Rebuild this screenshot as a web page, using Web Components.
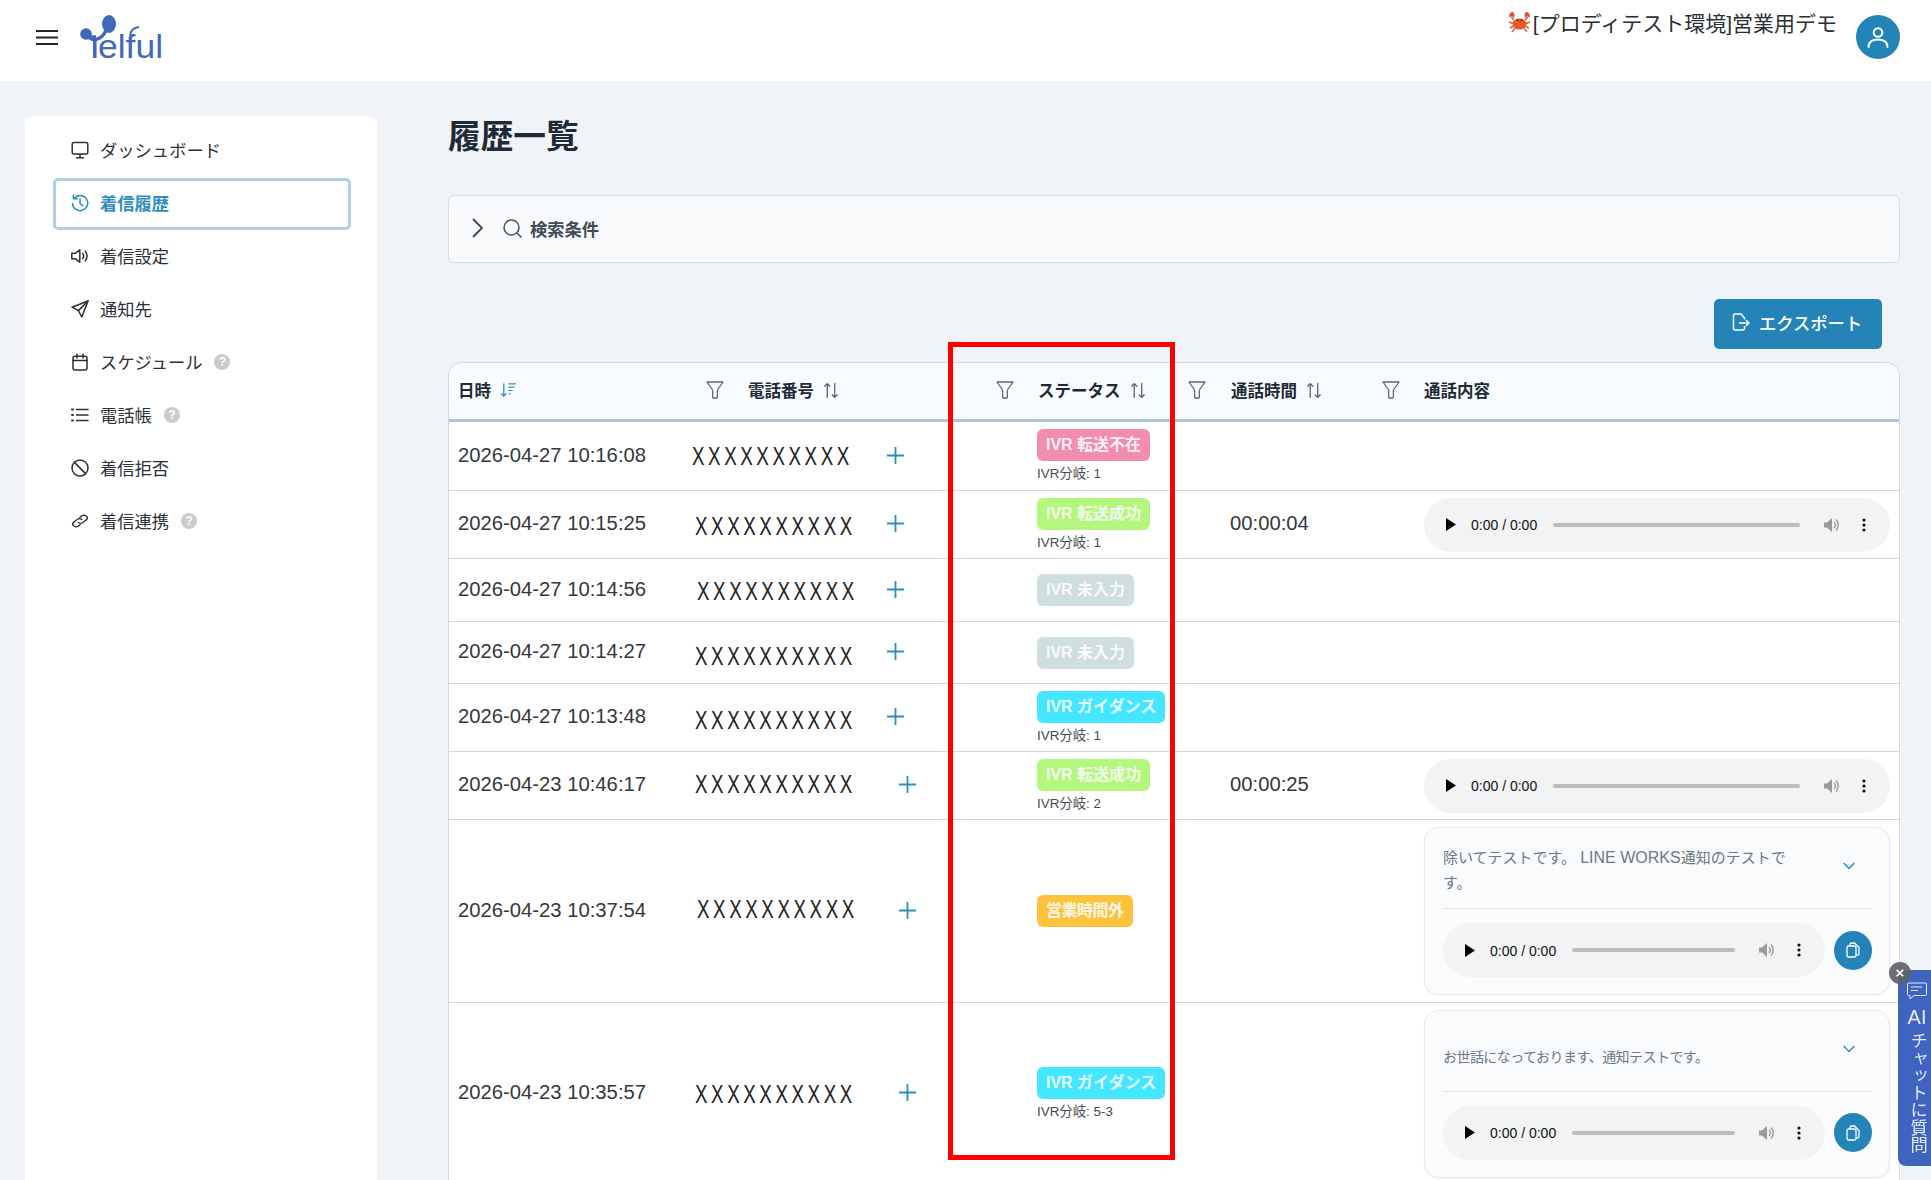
<!DOCTYPE html>
<html lang="ja">
<head>
<meta charset="utf-8">
<title>履歴一覧</title>
<style>
    html, body { margin: 0; height: 100%; overflow: hidden; background: #f0f4f9; }
    body { font-family: "Liberation Sans", "Noto Sans CJK JP", sans-serif; color: #333; }
</style>
</head>
<body>

<app-header></app-header>

<app-shell>
    <side-nav slot="side">
        <nav-item icon="desktop">ダッシュボード</nav-item>
        <nav-item icon="history" active>着信履歴</nav-item>
        <nav-item icon="volume">着信設定</nav-item>
        <nav-item icon="send">通知先</nav-item>
        <nav-item icon="calendar" help>スケジュール</nav-item>
        <nav-item icon="list" help>電話帳</nav-item>
        <nav-item icon="ban">着信拒否</nav-item>
        <nav-item icon="link" help>着信連携</nav-item>
    </side-nav>

    <page-title>履歴一覧</page-title>
    <search-panel>検索条件</search-panel>
    <export-bar>エクスポート</export-bar>

    <call-table>
        <call-row date="2026-04-27 10:16:08" h="69" px="0" py="0" plus="195">
            <status-tag slot="status" kind="pink" sub="IVR分岐: 1">IVR 転送不在</status-tag>
        </call-row>
        <call-row date="2026-04-27 10:15:25" h="68" px="3" py="1" plus="192" dur="00:00:04">
            <status-tag slot="status" kind="green" sub="IVR分岐: 1">IVR 転送成功</status-tag>
            <audio-bar slot="content"></audio-bar>
        </call-row>
        <call-row date="2026-04-27 10:14:56" h="63" px="5" py="1" plus="190">
            <status-tag slot="status" kind="grey">IVR 未入力</status-tag>
        </call-row>
        <call-row date="2026-04-27 10:14:27" h="62" px="3" py="3" plus="192">
            <status-tag slot="status" kind="grey">IVR 未入力</status-tag>
        </call-row>
        <call-row date="2026-04-27 10:13:48" h="68" px="3" py="2" plus="192">
            <status-tag slot="status" kind="cyan" sub="IVR分岐: 1">IVR ガイダンス</status-tag>
        </call-row>
        <call-row date="2026-04-23 10:46:17" h="68" px="3" py="-2" plus="204" dur="00:00:25">
            <status-tag slot="status" kind="green" sub="IVR分岐: 2">IVR 転送成功</status-tag>
            <audio-bar slot="content"></audio-bar>
        </call-row>
        <call-row date="2026-04-23 10:37:54" h="183" px="5" py="-2" plus="202">
            <status-tag slot="status" kind="amber">営業時間外</status-tag>
            <note-card slot="content" top="17">除いてテストです。 <span style="font-size:16px">LINE WORKS</span>通知のテストで<br>す。</note-card>
        </call-row>
        <call-row date="2026-04-23 10:35:57" h="182" px="3" py="0" plus="204">
            <status-tag slot="status" kind="cyan" sub="IVR分岐: 5-3">IVR ガイダンス</status-tag>
            <note-card slot="content" top="34" tight>お世話になっております、通知テストです。</note-card>
        </call-row>
    </call-table>
</app-shell>

<mark-box></mark-box>
<chat-tab></chat-tab>

<script>
    // 共通: shadow root に markup を流し込むだけ
    class Base extends HTMLElement {
        render(html) {
            if (!this.shadowRoot) this.attachShadow({mode: 'open'});
            this.shadowRoot.innerHTML = html;
        }
    }

    const ICONS = {
        desktop: '<rect x="1.2" y="1.5" width="15.6" height="11.5" rx="1.6"/><path d="M9 13v3.6M5.5 16.8h7"/>',
        history: '<path d="M3.2 4.2A7.6 7.6 0 1 1 1.5 9.6"/><path d="M2.4 1v3.8h3.9"/><path d="M9 5v4.6l2.8 2"/>',
        volume: '<path d="M.8 6.3h3.4L8.8 2.800v12.400l-4.600-3.500H.8z"/><path d="M11.500 6.400a3.800 3.800 0 0 1 0 5.200"/><path d="M14.200 4.200a7.200 7.200 0 0 1 0 9.600"/>',
        send: '<path d="M17 1 1 7.2l6.4 3.4L10.8 17z"/><path d="M17 1 7.4 10.6"/>',
        calendar: '<rect x="2" y="3.2" width="14" height="13.8" rx="2"/><path d="M2 7.6h14M6 1v4M12 1v4"/>',
        list: '<path d="M5.5 3.5H17M5.5 9H17M5.5 14.5H17"/><path d="M1 3.5h1M1 9h1M1 14.5h1" stroke-width="2"/>',
        ban: '<circle cx="9" cy="9" r="8"/><path d="m3.4 3.4 11.2 11.2"/>',
        link: '<g transform="translate(0 2) scale(1 .78)"><path d="M7.2 10.8a3.4 3.4 0 0 0 4.8 0l3.4-3.4a3.4 3.4 0 0 0-4.8-4.8L9 4.2"/><path d="M10.8 7.2a3.4 3.4 0 0 0-4.8 0l-3.4 3.4a3.4 3.4 0 0 0 4.8 4.8L9 13.8"/></g>'
    };
    const FUNNEL = '<svg class="funnel" width="18" height="18" viewBox="0 0 18 18" fill="none" stroke="#5d6872" stroke-width="1.3" stroke-linejoin="round"><path d="M1 1h16l-5.6 8v7.3a.7.7 0 0 1-.7.7H7.3a.7.7 0 0 1-.7-.7V9z"/></svg>';
    const SORT = '<svg class="sort" width="16" height="17" viewBox="0 0 15 16" fill="none" stroke="#56616b" stroke-width="1.2"><path d="M4 15V1.5M1.3 4.2 4 1.5l2.7 2.7"/><path d="M11 1v13.5M8.3 11.8l2.7 2.7 2.7-2.7"/></svg>';
    const SORT_ON = '<svg class="sort" width="17" height="16" viewBox="0 0 18 16" fill="none" stroke="#2f8dbe" stroke-width="1.4"><path d="M4 1v13.5M1.2 11.7 4 14.5l2.8-2.8"/><path d="M9 1.5h8M9 5h6.5M9 8.5h4.5M9 12h2.5" stroke-width="1.200"/></svg>';

    customElements.define('app-header', class extends Base {
        connectedCallback() {
            this.render(`
            <style>
                :host { display: flex; height: 81px; background: #fff; padding: 0 31px 0 36px; box-sizing: border-box; }
                .burger { margin-top: 28px; }
                .logo { margin: 15px 0 0 22px; }
                .logo text { font-family: "Liberation Sans", sans-serif; font-size: 34px; fill: #4169b8; }
                .org { margin: 9px 19px 0 auto; display: flex; align-items: center; height: 26px; font-size: 21px; color: #2b2f33; white-space: nowrap; }
                .crab { margin-right: 2px; }
                .me { margin-top: 15px; width: 44px; height: 44px; border-radius: 50%; background: #2484b8; display: flex; align-items: center; justify-content: center; }
            </style>
            <svg class="burger" width="22" height="19" viewBox="0 0 22 19" stroke="#20262c" stroke-width="2.2"><path d="M0 3h22M0 9.5h22M0 16h22"/></svg>
            <svg class="logo" width="84" height="56" viewBox="0 0 84 56">
                <circle cx="6" cy="19" r="5.8" fill="#4169b8"/>
                <ellipse cx="29" cy="9" rx="7" ry="9" fill="#4169b8"/>
                <path d="M8 22q9 6 16-3 2-3 3-6" fill="none" stroke="#4169b8" stroke-width="3.4"/>
                <path d="M6 22h10M14.800 24v19" fill="none" stroke="#4169b8" stroke-width="3.6"/>
                <path d="M50 20q1-7 9-8" fill="none" stroke="#4169b8" stroke-width="2"/>
                <text x="18" y="43" textLength="65" lengthAdjust="spacingAndGlyphs">elful</text>
            </svg>
            <div class="org">
                <svg class="crab" width="23" height="22" viewBox="0 0 23 22" fill="none">
                    <path d="M6 13 1 11M6 15l-4 2M7 17l-3 4M17 13l5-2M17 15l4 2M16 17l3 4" stroke="#d8613c" stroke-width="1.4"/>
                    <path d="M6 9 3 6M17 9l3-3" stroke="#d8613c" stroke-width="1.6"/>
                    <path d="M5 1C2 1 .8 3.5 1.2 6.5L4 5 5 7c2-1.5 2-4 0-6zM18 1c3 0 4.200 2.500 3.800 5.500L19 5l-1 2c-2-1.500-2-4 0-6z" fill="#e0512a"/>
                    <ellipse cx="11.500" cy="13" rx="7" ry="5.600" fill="#ea5a26"/>
                    <circle cx="9.500" cy="9" r="1" fill="#5a2a1c"/><circle cx="13.500" cy="9" r="1" fill="#5a2a1c"/>
                </svg>
                [プロディテスト環境]営業用デモ
            </div>
            <div class="me">
                <svg width="24" height="24" viewBox="0 0 24 24" fill="none" stroke="#fff" stroke-width="2" stroke-linecap="round"><circle cx="12" cy="7.500" r="4.300"/><path d="M2.500 22c0-5 4-7.500 9.500-7.500s9.500 2.500 9.500 7.500"/></svg>
            </div>`);
        }
    });

    customElements.define('app-shell', class extends Base {
        connectedCallback() {
            this.render(`
            <style>
                :host { display: grid; grid-template-columns: 352px 1fr; height: calc(100vh - 81px); padding-left: 25px; column-gap: 71px; overflow: hidden; box-sizing: border-box; }
                .main { padding-right: 31px; min-width: 0; }
            </style>
            <slot name="side"></slot>
            <div class="main"><slot></slot></div>`);
        }
    });

    customElements.define('side-nav', class extends Base {
        connectedCallback() {
            this.render(`
            <style>
                :host { display: flex; flex-direction: column; gap: 2px; margin-top: 35px; background: #fff; border-radius: 8px 8px 0 0; padding: 8px 26px 0 28px; }
            </style>
            <slot></slot>`);
        }
    });

    customElements.define('nav-item', class extends Base {
        connectedCallback() {
            const on = this.hasAttribute('active');
            this.render(`
            <style>
                :host { display: flex; align-items: center; height: 51px; padding-left: 18px; box-sizing: border-box; font-size: 17.300px; color: ${on ? '#2f8dbe' : '#2b3138'}; font-weight: ${on ? 600 : 400}; border-radius: 5px; ${on ? 'height: 52px; margin: 1px 0 -2px; border: 3px solid #aed0e1; padding: 0 0 3px 15px;' : ''} }
                svg { flex: none; margin-right: 11px; }
                .q { width: 16px; height: 16px; margin-left: 12px; border-radius: 50%; background: #c9cbcd; color: #fff; font: 700 12px/16px "Liberation Sans", sans-serif; text-align: center; }
            </style>
            <svg width="18" height="18" viewBox="0 0 18 18" fill="none" stroke="currentColor" stroke-width="1.5" stroke-linejoin="round" stroke-linecap="round">${ICONS[this.getAttribute('icon')]}</svg>
            <slot></slot>
            ${this.hasAttribute('help') ? '<span class="q">?</span>' : ''}`);
        }
    });

    customElements.define('page-title', class extends Base {
        connectedCallback() {
            this.render(`
            <style>
                :host { display: block; padding-top: 36px; font-size: 32.700px; line-height: 40px; font-weight: 700; color: #1f2a37; }
            </style>
            <slot></slot>`);
        }
    });

    customElements.define('search-panel', class extends Base {
        connectedCallback() {
            this.render(`
            <style>
                :host { display: flex; align-items: center; height: 68px; margin-top: 38px; padding: 0 0 2px 23px; box-sizing: border-box; border: 1px solid #d4dce4; border-radius: 6px; background: #f8fafc; font-size: 17.300px; font-weight: 600; color: #3f4c59; }
                .find { margin: 0 8px 0 20px; }
            </style>
            <svg width="11" height="20" viewBox="0 0 11 20" fill="none" stroke="#3b4651" stroke-width="1.800"><path d="m1 1 9 9-9 9"/></svg>
            <svg class="find" width="19" height="19" viewBox="0 0 19 19" fill="none" stroke="#4a5560" stroke-width="1.500"><circle cx="8.500" cy="8.500" r="7.500"/><path d="m14 14 4.500 4.500"/></svg>
            <slot></slot>`);
        }
    });

    customElements.define('export-bar', class extends Base {
        connectedCallback() {
            this.render(`
            <style>
                :host { display: flex; justify-content: flex-end; margin-top: 36px; padding-right: 18px; }
                button { display: flex; align-items: center; width: 168px; height: 50px; padding: 0 0 4px 18px; box-sizing: border-box; border: 0; border-radius: 5px; background: #2484b8; color: #fff; font: 500 17.300px "Liberation Sans", "Noto Sans CJK JP", sans-serif; }
                svg { margin-right: 8px; }
            </style>
            <button>
                <svg width="19" height="18" viewBox="0 0 19 18" fill="none" stroke="#fff" stroke-width="1.400" stroke-linejoin="round"><path d="M12.500 6.500V5L9 1H3a1.500 1.500 0 0 0-1.500 1.500v13A1.500 1.500 0 0 0 3 17h8a1.500 1.500 0 0 0 1.500-1.500V13"/><path d="M7 10h10M14 7l3 3-3 3"/></svg>
                <slot></slot>
            </button>`);
        }
    });

    customElements.define('call-table', class extends Base {
        connectedCallback() {
            this.render(`
            <style>
                :host { display: block; margin-top: 13px; border: 1px solid #d0d9e0; border-bottom: 0; border-radius: 14px 14px 0 0; background: #fff; overflow: hidden; }
                .head { display: grid; grid-template-columns: 286px 290px 192px 194px 1fr; height: 59px; box-sizing: border-box; border-bottom: 3px solid #aec6d2; background: #f8fcff; font-size: 16.500px; font-weight: 700; color: #1f2a37; }
                .th { display: flex; align-items: center; padding: 0 0 2px 13px; }
                .th:first-child { padding-left: 9px; }
                .th:nth-child(4) { padding-left: 14px; }
                .sort { margin-left: 9px; }
                .funnel { margin-left: auto; margin-right: 11px; }
            </style>
            <div class="head">
                <div class="th"><span>日時</span>${SORT_ON}${FUNNEL}</div>
                <div class="th"><span>電話番号</span>${SORT}${FUNNEL}</div>
                <div class="th"><span>ステータス</span>${SORT}${FUNNEL}</div>
                <div class="th"><span>通話時間</span>${SORT}${FUNNEL}</div>
                <div class="th"><span>通話内容</span></div>
            </div>
            <slot></slot>`);
        }
    });

    customElements.define('call-row', class extends Base {
        connectedCallback() {
            const a = n => this.getAttribute(n);
            this.render(`
            <style>
                :host { display: grid; grid-template-columns: 243px 333px 192px 194px 1fr; align-items: center; height: ${a('h')}px; box-sizing: border-box; border-bottom: 1px solid #d2d8de; font-size: 20.250px; color: #33383d; }
                .date { padding: 0 0 2px 9px; }
                .tel { display: flex; align-items: center; }
                .x { width: ${a('plus')}px; margin: ${a('py')}px 0 ${-a('py')}px ${a('px')}px; font-size: 26px; line-height: 30px; color: #222; white-space: nowrap; flex: none; }
                /* マスクのXは縦長に見せる */
                .x span { display: inline-block; letter-spacing: 5px; transform: scaleX(.72); transform-origin: left center; }
                .plus { flex: none; margin-bottom: 2px; }
                .st { padding-left: 12px; }
                .dur { padding: 0 0 2px 13px; }
                .body { padding: 0 9px 0 13px; }
            </style>
            <div class="date">${a('date')}</div>
            <div class="tel">
                <div class="x"><span>XXXXXXXXXX</span></div>
                <svg class="plus" width="17" height="17" viewBox="0 0 17 17" stroke="#2f8dbe" stroke-width="1.800"><path d="M8.500 0v17M0 8.500h17"/></svg>
            </div>
            <div class="st"><slot name="status"></slot></div>
            <div class="dur">${a('dur') || ''}</div>
            <div class="body"><slot name="content"></slot></div>`);
        }
    });

    const TAG_COLORS = {pink: '#f28cb1', green: '#b4f77e', grey: '#cfdedf', cyan: '#44e7ff', amber: '#fdc33f'};
    customElements.define('status-tag', class extends Base {
        connectedCallback() {
            const sub = this.getAttribute('sub');
            const kind = this.getAttribute('kind');
            this.render(`
            <style>
                :host { display: block; ${sub ? 'padding-top: 4px;' : ''} }
                .tag { display: inline-block; height: 32px; line-height: 32px; padding: 0 9px; border-radius: 6px; background: ${TAG_COLORS[kind]}; color: rgba(255,255,255,.88); font-size: 16px; font-weight: 700; white-space: nowrap; vertical-align: top; ${kind === 'amber' ? 'letter-spacing: -.5px;' : ''} }
                .row { height: 32px; }
                .sub { height: 26px; line-height: 26px; font-size: 13.400px; color: #444b52; }
            </style>
            <div class="row"><span class="tag"><slot></slot></span></div>
            ${sub ? `<div class="sub">${sub}</div>` : ''}`);
        }
    });

    customElements.define('audio-bar', class extends Base {
        connectedCallback() {
            this.render(`
            <style>
                :host { display: flex; align-items: center; height: 54px; flex: 1; min-width: 0; padding: 0 24px 0 22px; box-sizing: border-box; border-radius: 27px; background: #f1f3f4; font-size: 14px; color: #111; }
                .time { margin: 1px 16px 0 15px; white-space: nowrap; }
                .track { flex: 1; height: 4px; border-radius: 2px; background: #bdbdbd; }
                .vol { margin: 0 22px 0 24px; }
            </style>
            <svg width="10" height="13" viewBox="0 0 10 13"><path d="M0 0v13l10-6.500z" fill="#000"/></svg>
            <span class="time">0:00 / 0:00</span>
            <span class="track"></span>
            <svg class="vol" width="16" height="18" viewBox="0 0 16 18"><path d="M0 6.500h3L8 2v14l-5-4.500H0z" fill="#9a9a9a"/><path d="M10 6a4 4 0 0 1 0 6M12 3.500a8 8 0 0 1 0 11" fill="none" stroke="#9a9a9a" stroke-width="1.400"/></svg>
            <svg width="4" height="14" viewBox="0 0 4 14" fill="#111"><circle cx="2" cy="2" r="1.600"/><circle cx="2" cy="7" r="1.600"/><circle cx="2" cy="12" r="1.600"/></svg>`);
        }
    });

    customElements.define('note-card', class extends Base {
        connectedCallback() {
            const tight = this.hasAttribute('tight');
            this.render(`
            <style>
                :host { display: block; border: 1px solid #e4e9ee; border-radius: 14px; background: #f9fbfd; padding: 0 17px 0 18px; box-shadow: 0 1px 2px rgba(30,50,70,.04); }
                .top { display: flex; height: 81px; box-sizing: border-box; border-bottom: 1px solid #e4e8ed; }
                .text { width: 350px; padding-top: ${this.getAttribute('top')}px; font-size: ${tight ? 14 : 15}px; line-height: 25px; color: #6c7885; ${tight ? 'letter-spacing: -.55px;' : ''} white-space: nowrap; }
                .chev { margin: 34px 17px 0 auto; }
                .audio { display: flex; align-items: center; padding: 14px 0 17px; }
                .btn { flex: none; width: 38px; height: 39px; margin-left: 9px; border-radius: 50%; background: #2484b8; display: flex; align-items: center; justify-content: center; }
            </style>
            <div class="top">
                <div class="text"><slot></slot></div>
                <svg class="chev" width="12" height="8" viewBox="0 0 12 8" fill="none" stroke="#2f8dbe" stroke-width="1.500"><path d="m.7 1 5.300 5.500L11.300 1"/></svg>
            </div>
            <div class="audio">
                <audio-bar></audio-bar>
                <div class="btn"><svg width="14" height="16" viewBox="0 0 14 16" fill="none" stroke="#fff" stroke-width="1.300" stroke-linejoin="round"><path d="M4 4V2.500A1.500 1.500 0 0 1 5.500 1h3L13 5.500v6A1.500 1.500 0 0 1 11.500 13H10"/><rect x="1" y="4" width="9" height="11" rx="1.500"/></svg></div>
            </div>`);
        }
    });

    // 赤枠は注釈なので画面の上に重ねる
    customElements.define('mark-box', class extends Base {
        connectedCallback() {
            this.render(`
            <style>
                :host { position: fixed; left: 948px; top: 342px; width: 227px; height: 818px; box-sizing: border-box; border: 5.500px solid #f00; pointer-events: none; }
            </style>`);
        }
    });

    customElements.define('chat-tab', class extends Base {
        connectedCallback() {
            this.render(`
            <style>
                :host { position: fixed; right: 0; top: 970px; width: 33px; height: 196px; box-sizing: border-box; padding: 12px 0 0 5px; border-radius: 8px 0 0 8px; background: #3f64c0; color: #e4ebfb; display: flex; flex-direction: column; align-items: center; }
                .ai { margin-top: 5px; font-size: 20px; line-height: 24px; }
                .v { margin-top: 3px; writing-mode: vertical-rl; text-orientation: upright; font-size: 17.300px; line-height: 1; white-space: nowrap; }
                .x { position: absolute; left: -9px; top: -8px; width: 22px; height: 22px; border-radius: 50%; background: rgba(95,98,104,.92); color: #fff; font: 700 15px/22px "Liberation Sans", sans-serif; text-align: center; }
            </style>
            <span class="x">×</span>
            <svg width="20" height="18" viewBox="0 0 20 18" fill="none" stroke="#e4ebfb" stroke-width="1"><path d="M1.500 1h17a1 1 0 0 1 1 1v10.500a1 1 0 0 1-1 1H7L3 17v-3.500H1.500a1 1 0 0 1-1-1V2a1 1 0 0 1 1-1z"/><path d="M4 5h11M4 8.500h7"/></svg>
            <span class="ai">AI</span>
            <span class="v">チャットに質問</span>`);
        }
    });
</script>
</body>
</html>
